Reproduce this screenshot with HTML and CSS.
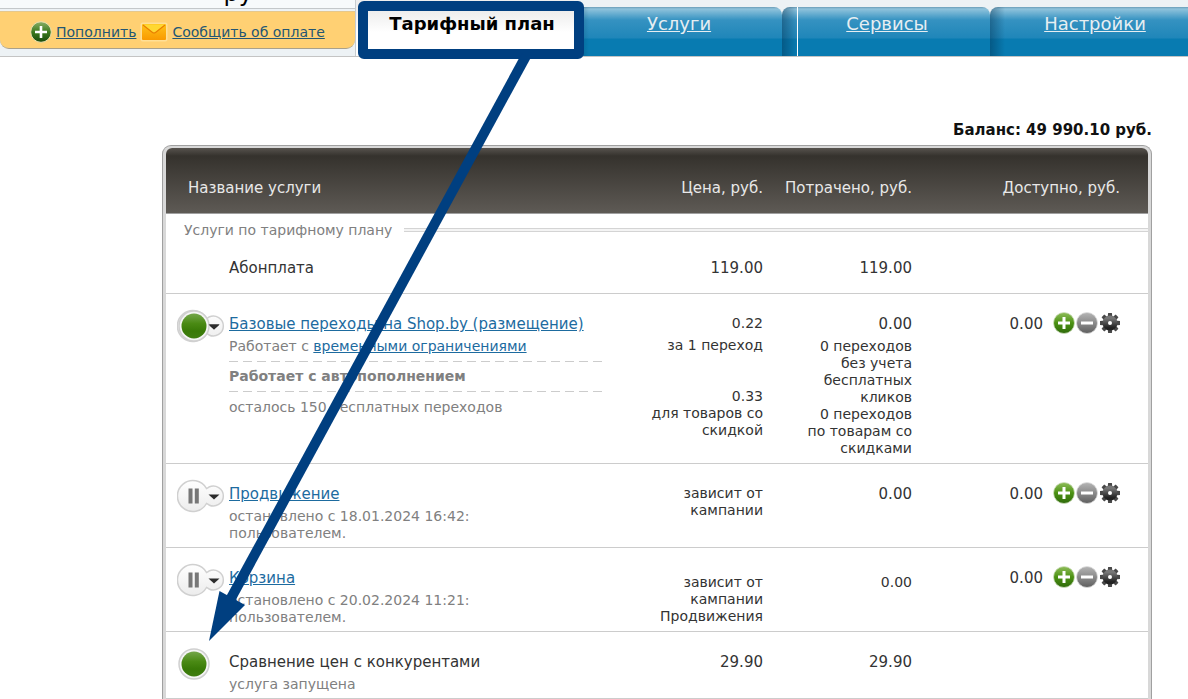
FILE: index.html
```html
<!DOCTYPE html>
<html lang="ru">
<head>
<meta charset="utf-8">
<title>Тарифный план</title>
<link rel="stylesheet" href="styles.css">
</head>
<body>
<svg class="defs" width="0" height="0" aria-hidden="true">
  <defs>
    <linearGradient id="g-green" x1="0" y1="0" x2="0" y2="1"><stop offset="0" stop-color="#8fbd5a"/><stop offset=".5" stop-color="#4b9112"/><stop offset="1" stop-color="#2f6a0c"/></linearGradient>
    <linearGradient id="g-dark" x1="0" y1="0" x2="0" y2="1"><stop offset="0" stop-color="#8bb06a"/><stop offset=".5" stop-color="#3d7a1d"/><stop offset="1" stop-color="#174a0c"/></linearGradient>
    <linearGradient id="g-gray" x1="0" y1="0" x2="0" y2="1"><stop offset="0" stop-color="#b5b5b5"/><stop offset=".5" stop-color="#8a8a8a"/><stop offset="1" stop-color="#5e5e5e"/></linearGradient>
    <linearGradient id="g-gear" x1="0" y1="0" x2="0" y2="1"><stop offset="0" stop-color="#777"/><stop offset="1" stop-color="#222"/></linearGradient>
    <linearGradient id="g-light" x1="0" y1="0" x2="0" y2="1"><stop offset="0" stop-color="#fff"/><stop offset="1" stop-color="#ececec"/></linearGradient>
    <linearGradient id="g-lamp" x1="0" y1="0" x2="0" y2="1"><stop offset="0" stop-color="#74a64a"/><stop offset=".4" stop-color="#4a8a14"/><stop offset=".7" stop-color="#397a07"/><stop offset="1" stop-color="#3f7d10"/></linearGradient>
    <linearGradient id="g-mail" x1="0" y1="0" x2="0" y2="1"><stop offset="0" stop-color="#ffc21a"/><stop offset="1" stop-color="#f99a00"/></linearGradient>
    <symbol id="plus" viewBox="0 0 22 22"><circle cx="11" cy="11" r="10.5" fill="url(#g-green)" stroke="#cfe0bf" stroke-width=".8"/><path d="M11 5v12M5 11h12" stroke="#fff" stroke-width="3"/></symbol>
    <symbol id="plus-dark" viewBox="0 0 22 22"><circle cx="11" cy="11" r="10.3" fill="url(#g-dark)" stroke="#e9dfae" stroke-width="1"/><path d="M11 5v12M5 11h12" stroke="#fff" stroke-width="2.6"/></symbol>
    <symbol id="minus" viewBox="0 0 22 22"><circle cx="11" cy="11" r="10.5" fill="url(#g-gray)" stroke="#ddd" stroke-width=".8"/><path d="M5 11h12" stroke="#fff" stroke-width="3"/></symbol>
    <symbol id="gear" viewBox="0 0 22 22"><g fill="#484848"><path id="tooth" d="M8.600 6L9.100 1h3.800l.5 5z"/><use href="#tooth" transform="rotate(45 11 11)"/><use href="#tooth" transform="rotate(90 11 11)"/><use href="#tooth" transform="rotate(135 11 11)"/><use href="#tooth" transform="rotate(180 11 11)"/><use href="#tooth" transform="rotate(225 11 11)"/><use href="#tooth" transform="rotate(270 11 11)"/><use href="#tooth" transform="rotate(315 11 11)"/></g><circle cx="11" cy="11" r="4.700" fill="none" stroke="url(#g-gear)" stroke-width="5.400"/></symbol>
    <symbol id="mail" viewBox="0 0 28 20"><rect x=".5" y=".5" width="27" height="19" rx="2" fill="#ffdf96"/><rect x="2" y="2" width="24" height="16" rx="1" fill="url(#g-mail)"/><path d="M2.500 2.500h23L14 11z" fill="#ffd832"/><path d="M3 3l9.500 7.500q1.500 1 3 0L25 3" fill="none" stroke="#e87e00" stroke-width="1.100"/></symbol>
    <symbol id="shell" viewBox="0 0 48 34"><path d="M29.500 9.500A15.500 15.500 0 1 0 29.500 24.500Q31 25 32 26A10 10 0 1 0 32 8Q31 9 29.500 9.500z" fill="url(#g-light)" stroke="#d0d0d0" stroke-width="1.500"/><path d="M31.500 15.500h11l-5.500 5z" fill="#2c2c2c"/></symbol>
    <symbol id="run-menu" viewBox="0 0 48 34"><use href="#shell"/><circle cx="17" cy="17" r="15" fill="#f5f5f5" stroke="#d0d0d0" stroke-width="1.500"/><path d="M31.500 15.500h11l-5.500 5z" fill="#2c2c2c"/><circle cx="17" cy="17" r="12.500" fill="url(#g-lamp)"/></symbol>
    <symbol id="pause-menu" viewBox="0 0 48 34"><use href="#shell"/><path d="M13.500 9.500v15M19.800 9.500v15" stroke="#777" stroke-width="4"/></symbol>
    <symbol id="run" viewBox="0 0 48 34"><circle cx="17" cy="17" r="15" fill="#f5f5f5" stroke="#d0d0d0" stroke-width="1.500"/><circle cx="17" cy="17" r="12.500" fill="url(#g-lamp)"/></symbol>
  </defs>
</svg>

<header class="top">
  <div class="account">
    <div class="account-name">ру</div>
    <div class="account-links">
      <svg class="icon" aria-hidden="true"><use href="#plus-dark"/></svg><a href="#">Пополнить</a>
      <svg class="icon-mail" aria-hidden="true"><use href="#mail"/></svg><a href="#">Сообщить об оплате</a>
    </div>
  </div>
  <nav class="tabs">
    <span class="tab-active">Тарифный план</span>
    <a class="tab" href="#">Услуги</a>
    <a class="tab tab-lined" href="#">Сервисы</a>
    <a class="tab" href="#">Настройки</a>
  </nav>
</header>

<main class="content">
  <p class="balance">Баланс: 49 990.10 руб.</p>
  <div class="panel">
    <table class="services">
      <colgroup><col class="c-state"><col><col class="c-price"><col class="c-spent"><col class="c-avail"><col class="c-actions"></colgroup>
      <thead>
        <tr><th class="th-name" colspan="2">Название услуги</th><th class="num">Цена, руб.</th><th class="num">Потрачено, руб.</th><th class="num th-avail" colspan="2">Доступно, руб.</th></tr>
      </thead>
      <tbody>
        <tr class="section"><td colspan="6"><div class="section-title"><span>Услуги по тарифному плану</span><i class="rule"></i></div></td></tr>
        <tr class="fee"><td></td><td>Абонплата</td><td class="num">119.00</td><td class="num">119.00</td><td></td><td></td></tr>
        <tr>
          <td><button class="state" aria-label="Состояние"><svg><use href="#run-menu"/></svg></button></td>
          <td><a href="#">Базовые переходы на Shop.by (размещение)</a>
            <div class="note">Работает с <a href="#">временными ограничениями</a></div>
            <div class="auto">Работает с автопополнением</div>
            <div class="left">осталось 150 бесплатных переходов</div></td>
          <td class="num"><div class="small">0.22</div><div class="note">за 1 переход</div><div class="discount">0.33<br>для товаров со<br>скидкой</div></td>
          <td class="num">0.00<div class="note usage">0 переходов<br>без учета<br>бесплатных<br>кликов<br>0 переходов<br>по товарам со<br>скидками</div></td>
          <td class="num">0.00</td>
          <td><div class="actions"><button aria-label="Пополнить"><svg><use href="#plus"/></svg></button><button aria-label="Снять"><svg><use href="#minus"/></svg></button><button aria-label="Настроить"><svg><use href="#gear"/></svg></button></div></td>
        </tr>
        <tr>
          <td><button class="state" aria-label="Состояние"><svg><use href="#pause-menu"/></svg></button></td>
          <td><a href="#">Продвижение</a><div class="note">остановлено с 18.01.2024 16:42:<br>пользователем.</div></td>
          <td class="num"><div class="compact">зависит от<br>кампании</div></td>
          <td class="num">0.00</td>
          <td class="num">0.00</td>
          <td><div class="actions"><button aria-label="Пополнить"><svg><use href="#plus"/></svg></button><button aria-label="Снять"><svg><use href="#minus"/></svg></button><button aria-label="Настроить"><svg><use href="#gear"/></svg></button></div></td>
        </tr>
        <tr>
          <td><button class="state" aria-label="Состояние"><svg><use href="#pause-menu"/></svg></button></td>
          <td><a href="#">Корзина</a><div class="note">остановлено с 20.02.2024 11:21:<br>пользователем.</div></td>
          <td class="num"><div class="compact lower">зависит от<br>кампании<br>Продвижения</div></td>
          <td class="num"><div class="compact lower">0.00</div></td>
          <td class="num">0.00</td>
          <td><div class="actions"><button aria-label="Пополнить"><svg><use href="#plus"/></svg></button><button aria-label="Снять"><svg><use href="#minus"/></svg></button><button aria-label="Настроить"><svg><use href="#gear"/></svg></button></div></td>
        </tr>
        <tr>
          <td><button class="state" aria-label="Состояние"><svg><use href="#run"/></svg></button></td>
          <td>Сравнение цен с конкурентами<div class="note">услуга запущена</div></td>
          <td class="num">29.90</td><td class="num">29.90</td><td></td><td></td>
        </tr>
      </tbody>
    </table>
  </div>
</main>

<svg class="callout" width="600" height="660" viewBox="0 0 600 660" aria-hidden="true">
  <rect x="363" y="6" width="216" height="48" rx="1" fill="none" stroke="#003f80" stroke-width="10" stroke-linejoin="round"/>
  <path d="M526 56L230 600" stroke="#003f80" stroke-width="10"/>
  <path d="M209 641L219.500 591L245 605z" fill="#003f80"/>
</svg>
</body>
</html>
```
FILE: styles.css
```css
* { box-sizing: border-box; }
html { overflow: hidden; }
body { margin: 0; background: #fff; color: #333; font: 15px/20px Verdana, "DejaVu Sans", sans-serif; overflow: hidden; }
a { color: #1d6b9f; }
button { border: 0; padding: 0; background: none; display: block; }
.defs, .callout { position: absolute; left: 0; top: 0; pointer-events: none; }

.top { display: flex; height: 57px; background: #edf2f5; border-bottom: 1px solid #c4c4c4; overflow: hidden; }
.account { flex: 0 0 356px; display: flex; flex-direction: column; padding-bottom: 7px; border-right: 1px solid #c8cdd0; }
.account-name { display: flex; align-items: flex-end; justify-content: flex-end; height: 9px; padding: 0 102px 3px 0; border-bottom: 1px solid #c4c8ca; background: #f7fafb; color: #000; font-size: 24px; line-height: 24px; white-space: nowrap; }
.account-links { flex: 1; display: flex; align-items: center; margin-top: 2px; padding: 4px 0 0 30px; font-size: 14px; background: #ffd073; border-top: 1px solid #e6c88c; border-bottom: 1px solid #a9a18c; border-radius: 0 0 9px 9px; white-space: nowrap; }
.account-links a { color: #235673; }
.icon { width: 22px; height: 22px; margin-right: 4px; }
.icon-mail { width: 28px; height: 20px; margin: 0 4px 0 4px; }

.tabs { flex: 1; display: flex; min-width: 0; }
.tab-active { flex: 0 0 218px; padding: 14px 0 0 14px; background: linear-gradient(#eee 12px, #fff 32px); color: #000; font-size: 18px; font-weight: bold; text-align: center; white-space: nowrap; }
.tab { flex: 1 0 208px; margin-top: 7px; padding: 7px 0 0 2px; border-radius: 8px 8px 0 0; background: linear-gradient(90deg, rgba(0, 40, 70, .4), transparent 15px), linear-gradient(#6a9db8 0, #8fc3dc 2px, #3592c1 13px, #1f86b9 31px, #087bb1 32px); color: #e6eef2; font-size: 18px; text-align: center; }
.tab-lined { background: linear-gradient(#fff, #fff) 15px 0 / 1px 100% no-repeat, linear-gradient(90deg, rgba(0, 40, 70, .4), transparent 15px), linear-gradient(#6a9db8 0, #8fc3dc 2px, #3592c1 13px, #1f86b9 31px, #087bb1 32px); }

.content { margin: 63px 36px 0 162px; }
.balance { margin: 0 0 5px; color: #111; font-weight: bold; text-align: right; }
.panel { border: 1px solid #a0a0a0; border-bottom: 0; border-radius: 9px 9px 0 0; background: #d8d8d8; padding: 2px 3px 0; }
.services { width: 100%; table-layout: fixed; border-collapse: separate; border-spacing: 0; background: #fff; border-radius: 6px 6px 0 0; }
.c-state { width: 63px; }
.c-price { width: 149px; }
.c-spent { width: 149px; }
.c-avail { width: 131px; }
.c-actions { width: 105px; }
th { height: 66px; padding: 14px 0 0; font-weight: normal; text-align: left; color: #e8e8e8; border-bottom: 1px solid #a0a0a0; background: linear-gradient(#57534e, #35322d 8px, #5e5a55); }
th:first-child { border-top-left-radius: 6px; }
th:last-child { border-top-right-radius: 6px; }
.services .th-name { padding-left: 22px; }
.services .th-avail { padding-right: 28px; }
td { padding: 20px 0 5px; vertical-align: top; border-bottom: 1px solid #ccc; }
.num { text-align: right; }
.section td { padding: 6px 0 0 18px; border: 0; }
.section-title { display: flex; align-items: center; gap: 12px; color: #808080; font-size: 14px; }
.rule { flex: 1; height: 4px; border: solid #d4d4d4; border-width: 1px 0; background: #f4f4f4; }
.fee td { padding: 18px 0 15px; }
.state svg { display: block; width: 48px; height: 34px; }
.state { margin: -5px 0 0 11px; }
.note, .auto, .left { font-size: 14px; line-height: 17px; color: #808080; }
.note { margin-top: 4px; }
.usage { padding-bottom: 1px; }
.num .note { color: #333; }
.small, .discount, .compact { font-size: 14px; line-height: 17px; }
.small { padding: 1px 0; }
.auto { width: 377px; margin: 6px 0 7px; padding: 7px 0; font-weight: bold; background: repeating-linear-gradient(90deg, #ccc 0 9px, transparent 9px 14px) top / 100% 1px no-repeat, repeating-linear-gradient(90deg, #ccc 0 9px, transparent 9px 14px) bottom / 100% 1px no-repeat; }
.discount { margin-top: 34px; }
.compact { padding-top: 1px; }
.compact.lower { padding-top: 6px; }
.actions { display: flex; gap: 1px; margin: -2px 0 0 10px; }
.actions svg { display: block; width: 22px; height: 22px; }
```
